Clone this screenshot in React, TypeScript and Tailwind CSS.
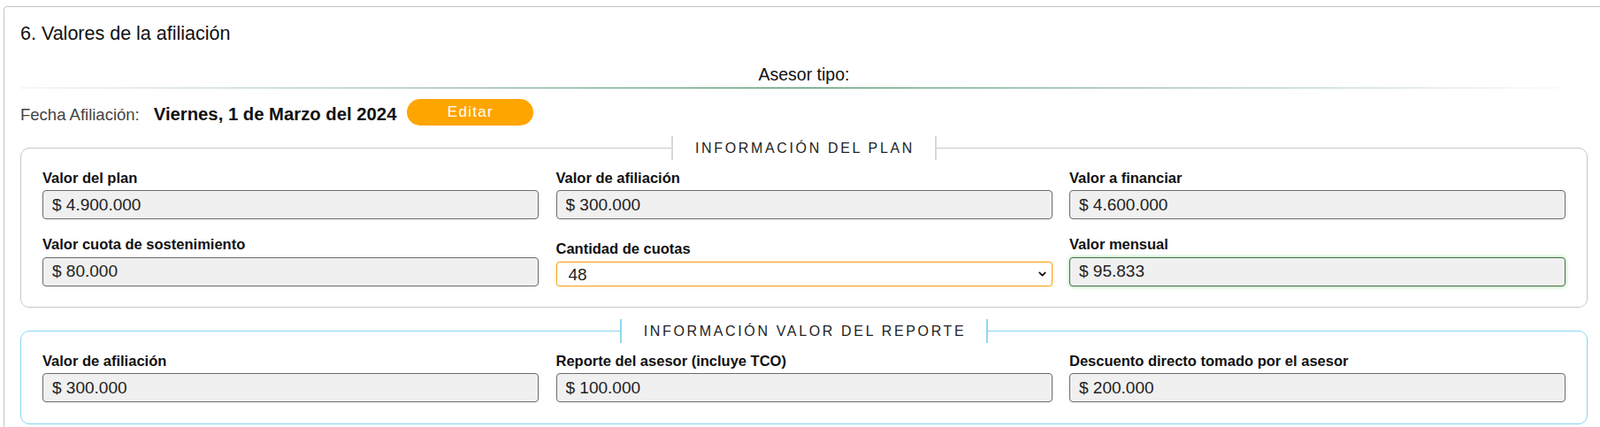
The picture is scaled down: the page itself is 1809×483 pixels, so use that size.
import { ChevronDown } from "lucide-react";

type Field = { label: string; value: string };

const planRow1: Field[] = [
  { label: "Valor del plan", value: "$ 4.900.000" },
  { label: "Valor de afiliación", value: "$ 300.000" },
  { label: "Valor a financiar", value: "$ 4.600.000" },
];

const reporte: Field[] = [
  { label: "Valor de afiliación", value: "$ 300.000" },
  { label: "Reporte del asesor (incluye TCO)", value: "$ 100.000" },
  { label: "Descuento directo tomado por el asesor", value: "$ 200.000" },
];

function Label({ children }: { children: React.ReactNode }) {
  return (
    <label className="block text-[16.5px] leading-[19px] font-bold text-[#111] mb-[4.5px]">
      {children}
    </label>
  );
}

function ReadOnlyInput({ value, highlight = false }: { value: string; highlight?: boolean }) {
  return (
    <input
      readOnly
      value={value}
      className={`
        block w-full h-[33px]
        rounded-[4px] border
        ${highlight ? "border-[#4d6e4d] shadow-[0_0_4px_#8fe08f]" : "border-[#6b6b6b]"}
        bg-[#f0f0f0] pl-[10px]
        text-[19px] text-[#222]
        outline-none
      `}
    />
  );
}

function Legend({ children, blue = false }: { children: React.ReactNode; blue?: boolean }) {
  return (
    <div
      className={`
        -mt-[14px] mx-auto w-fit h-[27px]
        bg-white border-x-2
        ${blue ? "border-[#8fd8f2]" : "border-[#d8d8d8]"}
        pl-[25px] pr-[23px]
        text-[16px] leading-[27px] tracking-[2.65px] text-[#222]
      `}
    >
      {children}
    </div>
  );
}

export default function App() {
  return (
    <div className="w-full h-[483px] overflow-hidden bg-white font-['Liberation_Sans',Arial,sans-serif]">
      <div className="ml-[4px] mt-[7px] w-[1810px] min-h-[520px] rounded-[4px] border border-[#c4c4c4] px-[18px] pt-[18px]">
        {/* Title */}
        <h2 className="text-[21.5px] leading-[25px] text-[#111]">6. Valores de la afiliación</h2>

        {/* Asesor */}
        <div className="mt-[22px] text-center text-[19.5px] leading-[22px] text-[#111]">Asesor tipo:</div>
        <div className="mt-[4px] h-px bg-[linear-gradient(to_right,rgba(230,236,232,0.6),#2a7a4a_50%,rgba(255,255,255,0))]" />

        {/* Fecha */}
        <div className="mt-[12px] flex items-center h-[30px]">
          <div className="flex items-baseline gap-[16px] mt-[5px]">
            <span className="text-[18.5px] leading-[21px] text-[#444]">Fecha Afiliación:</span>
            <span className="text-[20.3px] leading-[21px] font-bold text-[#111]">Viernes, 1 de Marzo del 2024</span>
          </div>
          <button className="ml-[12px] w-[143px] h-[30px] rounded-full bg-[#ffa500] text-white text-[17px] tracking-[1.3px]">
            Editar
          </button>
        </div>

        {/* Información del plan */}
        <div className="mt-[25px] rounded-[10px] border border-[#c8c8c8]">
          <Legend>INFORMACIÓN DEL PLAN</Legend>
          <div className="grid grid-cols-3 gap-x-[19.5px] gap-y-[19px] px-[24px] pt-[10.5px] pb-[23.5px] items-end">
            {planRow1.map((f) => (
              <div key={f.label}>
                <Label>{f.label}</Label>
                <ReadOnlyInput value={f.value} />
              </div>
            ))}
            <div>
              <Label>Valor cuota de sostenimiento</Label>
              <ReadOnlyInput value="$ 80.000" />
            </div>
            <div>
              <Label>Cantidad de cuotas</Label>
              <div className="relative">
                <select
                  defaultValue="48"
                  className="
                    block w-full h-[28px] appearance-none
                    rounded-[4px] border border-[#f5a623]
                    shadow-[0_0_3px_rgba(255,165,0,0.55)]
                    bg-white pl-[13px]
                    text-[19px] text-[#222]
                    outline-none
                  "
                >
                  <option value="12">12</option>
                  <option value="24">24</option>
                  <option value="36">36</option>
                  <option value="48">48</option>
                </select>
                <ChevronDown
                  size={13}
                  strokeWidth={3.2}
                  className="absolute right-[5px] top-1/2 -translate-y-1/2 text-[#111] pointer-events-none"
                />
              </div>
            </div>
            <div>
              <Label>Valor mensual</Label>
              <ReadOnlyInput value="$ 95.833" highlight />
            </div>
          </div>
        </div>

        {/* Información valor del reporte */}
        <div className="mt-[25.5px] rounded-[10px] border border-[#86d5f2]">
          <Legend blue>INFORMACIÓN VALOR DEL REPORTE</Legend>
          <div className="grid grid-cols-3 gap-x-[19.5px] px-[24px] pt-[11px] pb-[24px]">
            {reporte.map((f) => (
              <div key={f.label}>
                <Label>{f.label}</Label>
                <ReadOnlyInput value={f.value} />
              </div>
            ))}
          </div>
        </div>
      </div>
    </div>
  );
}
